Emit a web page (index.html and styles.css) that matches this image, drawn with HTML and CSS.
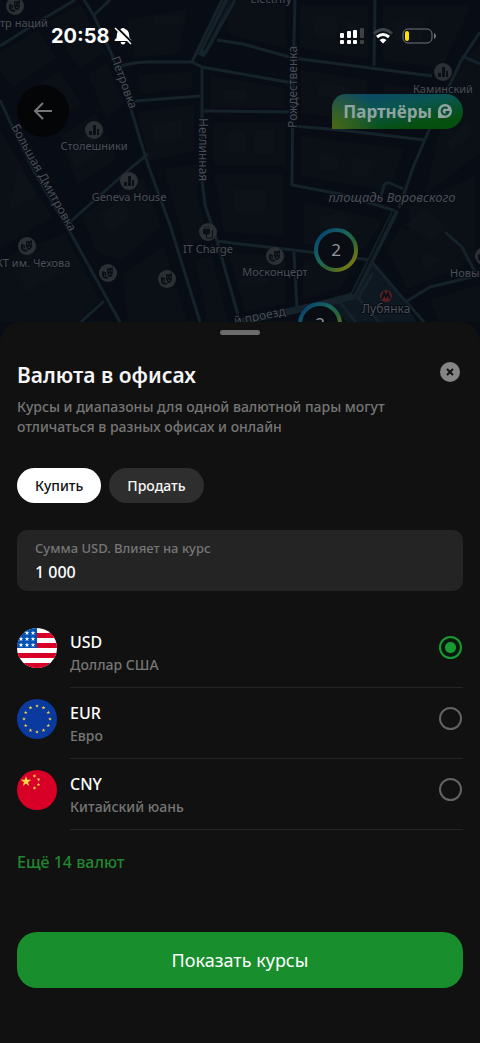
FILE: index.html
```html
<!DOCTYPE html>
<html lang="ru">

<head>
    <meta charset="UTF-8">
    <meta name="viewport" content="width=device-width, initial-scale=1.0">
    <title>Валюта в офисах</title>
    <link rel="stylesheet" href="styles.css">
</head>

<body>
    <div class="screen">
        <header class="top">
            <svg class="map" viewBox="0 0 480 342" preserveAspectRatio="xMidYMin slice" aria-hidden="true">
                <defs>
                    <linearGradient id="ring" x1="0" y1="0" x2="1" y2="1">
                        <stop offset="0.1" stop-color="#07446f" />
                        <stop offset="0.4" stop-color="#1b665c" />
                        <stop offset="0.6" stop-color="#286337" />
                        <stop offset="0.9" stop-color="#7b7a10" />
                    </linearGradient>
                    <g id="poi-house">
                        <circle r="9" fill="#2b3035" />
                        <path d="M-5 5v-4h3v4zM-1 5v-10h3v10zM3 5v-6h2v6z" fill="#0b1016" />
                    </g>
                    <g id="poi-theatre">
                        <circle r="9" fill="#2b3035" />
                        <path d="M-1-5q3 1 6-1v6q-1 4-3 4t-3-4zM-6-2l4 1v4l3 2q-5 2-7-2z" fill="#0b1016" />
                        <path d="M0-2h1.500M3-2h1.500M1 1q1 1 2 0M-4 1h1M-4 3h2" stroke="#2b3035" fill="none" />
                    </g>
                </defs>
                <rect width="480" height="342" fill="#080d15" />
                <g class="map-blocks">
                    <path d="M0 52l38-22 18 28-43 29L0 72zM48 22l32-18 26 48-26 17zM18 98l42-27 21 33-43 28zM88 75l19-12 18 41-19 13zM60 137l36-24 21 46-40 25zM137 112l57-7v46l-45 10zM127 20l60-11-8 45-44 3zM138 75l54-3v16l-51 6zM210 75l74 13v20h-74zM214 123h71v42h-71zM214 174h69v62l-59-4zM300 5h68v54l-68-11zM301 70l66 10v40l-66-6zM383 5h88l-29 63-59-8zM384 83l47 9-19 36-28-4zM301 136l103 13-16 42-87-15zM304 202l79 18-18 29-61-5zM409 206l66-30v90l-66-26zM387 250l14-23 65 38-58 24zM303 260l50 6-12 22-38 11zM228 253l57 3v48l-40 7zM164 170l34-7v36l11 41-23 6zM82 215l60-38 19 49-40 35-25-10zM0 130l52 87-52 31zM0 260l65-27 35 67-19 22H0zM123 275l41-30 23 77h-59zM195 260l17-4 16 66h-20zM452 75l28-32v110l-55 42zM430 300l50-16v38h-40zM220 0h66v48l-57-14z" />
                </g>
                <g class="map-courts">
                    <path d="M24 104l26-17 9 13-27 18zM67 147l24-14 9 20-24 14zM151 124l31-4v18l-27 5zM156 16h25l-4 9h-25zM224 90h22v10h-22zM228 132h17v20h-17zM255 130h19v24h-19zM315 17h22v18h-22zM347 20l12 4v14l-12-2zM318 82l32 5v12l-32-2zM320 152l19 3v15h-19zM353 157l20 5-6 16-16-3zM320 217l23-6 9 16-16 12-16-3zM406 225l17-18 24 19-14 16zM422 251l21 9-20 10zM18 164l19 31-28 17zM18 269l34-15 11 18-38 20zM99 215l23-15 9 18-20 15zM235 190h30v22h-30zM242 266h26v17h-26zM395 22l33-5-8 25-25-2zM447 142l20-21 6 12-22 20z" />
                </g>
                <path d="M316 302l40-8 16-32 28 33 17 27-57 10-28-22z" fill="#0e1820" />
                <g class="roads">
                    <path d="M0 46l38-24L75 0M84 0l10 16 18 39 14 38 22 72 22 60 30 97M94 15l16-15M121 66q14-4 29-4h42l10 5 91 16M202 68v112l3 25 12 36 23 81M192 62l30-62M205 54l30-54M217 40l26 4 50 14 139 18M135 101l65-5M204 111l89 1M0 100l10 22 26 53 34 57 50 90M70 222l62-55 16-13M104 301l-23 21M217 241l23 3 70 8 60 8M295 0l-2 80-1 105 48 9 53 16M375 0l-1 66M293 126l47 4 85 10M480 32l-19 29-21 44-26 60-15 43M462 56l18 8M380 200l4-15q2-3 6-2l13 6M294 252l3 56M407 301l23-14 50-12M445 232l17 15 13 25M372 262l22 26 30 34M373 273l-15 25 21 24M338 300l18 22" />
                </g>
                <g class="avenues">
                    <path d="M396 210l-26 52-17 34-34 9-79 17" />
                    <path d="M201 56l27-56" />
                </g>
                <path d="M394 211l-26 53-15 30M204 50l26-50" fill="none" stroke="#0a1118" stroke-width="2" />

                <g class="pois">
                    <use href="#poi-theatre" x="15" y="6" />
                    <use href="#poi-house" x="94" y="130" />
                    <use href="#poi-house" x="129" y="181" />
                    <use href="#poi-theatre" x="27" y="246" />
                    <use href="#poi-theatre" x="108" y="273" />
                    <use href="#poi-theatre" x="167" y="279" />
                    <use href="#poi-theatre" x="275" y="256" />
                    <use href="#poi-house" x="443" y="72" />
                    <use href="#poi-theatre" x="484" y="256" />
                    <circle cx="208" cy="232" r="9" fill="#2b3035" />
                    <path d="M203 229h7v4q-1 2-3.500 2T203 233z" fill="#0b1016" />
                    <path d="M205 226v4M208 226v4M206.500 234v4h6v-8" fill="none" stroke="#0b1016" />
                    <circle cx="386" cy="296" r="6" fill="#5c1d22" />
                    <path d="M382 299l2-6 2 4 2-4 2 6" fill="none" stroke="#0b1016" stroke-width="2" />
                </g>

                <g class="map-labels">
                    <text x="0" y="27">тр наций</text>
                    <text x="271" y="3" text-anchor="middle">Electrify</text>
                    <text x="94" y="150" text-anchor="middle">Столешники</text>
                    <text x="129" y="201" text-anchor="middle">Geneva House</text>
                    <text x="208" y="253" text-anchor="middle">IT Charge</text>
                    <text x="-4" y="267">КТ им. Чехова</text>
                    <text x="275" y="276" text-anchor="middle">Москонцерт</text>
                    <text x="443" y="93" text-anchor="middle">Каминский</text>
                    <text x="450" y="277">Новый</text>
                    <text class="label-big" x="386" y="313" text-anchor="middle">Лубянка</text>
                    <text class="label-square" x="392" y="202" text-anchor="middle">площадь Воровского</text>
                    <g class="streets">
                        <text transform="translate(111 58) rotate(70)">Петровка</text>
                        <text transform="translate(11 127) rotate(61)">Большая Дмитровка</text>
                        <text transform="translate(199 118) rotate(90)">Неглинная</text>
                        <text transform="translate(297 128) rotate(-90)">Рождественка</text>
                        <text transform="translate(235 325) rotate(-11)">й проезд</text>
                    </g>
                </g>

                <g class="clusters">
                    <circle cx="336" cy="250" r="20" />
                    <text x="336" y="256" text-anchor="middle">2</text>
                    <circle cx="320" cy="324" r="20" />
                    <text x="320" y="330" text-anchor="middle">2</text>
                </g>
            </svg>

            <div class="status-bar">
                <span class="clock">20:58
                    <svg width="18" height="18" viewBox="0 0 18 18" aria-hidden="true">
                        <path d="M9 1q1.500 0 2 1 3.500 1 4 5l.5 4 2 2q0 1-1 1H1.500q-1 0-1-1l2-2 .5-4Q3.500 3 7 2q.5-1 2-1zM6.500 15h5q-.5 2.500-2.500 2.500t-2.500-2.500z" fill="#fff" />
                        <path d="M2.500 0l16 16" stroke="#090e15" stroke-width="2" />
                        <path d="M1 1l16 16" stroke="#fff" stroke-width="1.500" />
                    </svg>
                </span>
                <span class="indicators">
                    <svg width="24" height="17" viewBox="0 0 24 17" aria-hidden="true">
                        <g fill="#fff">
                            <rect y="5" width="4" height="5" rx="1" />
                            <rect x="7" y="3" width="4" height="7" rx="1" />
                            <rect x="13" y="2" width="4" height="8" rx="1" />
                            <rect y="12" width="4" height="4" rx="1" />
                            <rect x="7" y="12" width="4" height="4" rx="1" />
                            <rect x="13" y="12" width="4" height="4" rx="1" />
                        </g>
                        <g fill="#3e4247">
                            <rect x="20" y="0" width="4" height="10" rx="1" />
                            <rect x="20" y="12" width="4" height="4" rx="1" />
                        </g>
                    </svg>
                    <svg width="20" height="16" viewBox="0 0 20 16" aria-hidden="true">
                        <path d="M1 5.500q9-8 18 0" fill="none" stroke="#3e4247" stroke-width="3" />
                        <path d="M4 9q6-5 12 0" fill="none" stroke="#fff" stroke-width="3" />
                        <path d="M6.500 12q3.500-3 7 0L10 15.500z" fill="#fff" />
                    </svg>
                    <svg width="34" height="16" viewBox="0 0 34 16" aria-hidden="true">
                        <rect x="1" y="1" width="29" height="14" rx="5" fill="none" stroke="#74777b" />
                        <path d="M32 5q2 1 2 3t-2 3z" fill="#74777b" />
                        <rect x="3" y="3" width="4" height="10" rx="2" fill="#ffe000" />
                    </svg>
                </span>
            </div>

            <div class="map-controls">
                <button class="back" type="button" aria-label="Назад">
                    <svg width="20" height="20" viewBox="0 0 20 20" aria-hidden="true">
                        <path d="M19 10H2M10 2l-8 8 8 8" />
                    </svg>
                </button>
                <a class="partners" href="#">Партнёры
                    <svg width="14" height="14" viewBox="0 0 14 14" aria-hidden="true">
                        <path d="M0 14V7a7 7 0 1 1 7 7z" fill="#8fa4a2" />
                        <path d="M9.500 4.500a3.500 3.500 0 1 0 1 3.500H7.500" fill="none" stroke="#0b4a30" stroke-width="2" />
                    </svg>
                </a>
            </div>
        </header>

        <main class="sheet">
            <div class="handle"></div>

            <div class="sheet-head">
                <h1>Валюта в офисах</h1>
                <button class="close" type="button" aria-label="Закрыть">
                    <svg width="8" height="8" viewBox="0 0 8 8" aria-hidden="true">
                        <path d="M1 1l6 6M7 1L1 7" />
                    </svg>
                </button>
            </div>
            <p class="hint">Курсы и диапазоны для одной валютной пары могут отличаться в разных офисах и онлайн</p>

            <div class="tabs">
                <button class="tab active" type="button">Купить</button>
                <button class="tab" type="button">Продать</button>
            </div>

            <div class="field">
                <label for="amount">Сумма USD. Влияет на курс</label>
                <input id="amount" type="text" inputmode="numeric" value="1 000">
            </div>

            <div class="currencies">
                <label class="currency">
                    <svg class="flag" viewBox="0 0 40 40" aria-hidden="true">
                        <defs>
                            <path id="star" d="M0-1L.225-.309H.951L.363.118.588.809 0 .382-.588.809-.363.118-.951-.309H-.225z" />
                        </defs>
                        <rect width="40" height="40" fill="#fff" />
                        <path d="M0 5h40v5H0zM0 15h40v5H0zM0 25h40v5H0zM0 35h40v5H0z" fill="#d80027" />
                        <rect width="20" height="20" fill="#0052b4" />
                        <g fill="#fff">
                            <use href="#star" transform="translate(10 5) scale(2.500)" />
                            <use href="#star" transform="translate(16 5) scale(2.500)" />
                            <use href="#star" transform="translate(4 11) scale(2.500)" />
                            <use href="#star" transform="translate(10 11) scale(2.500)" />
                            <use href="#star" transform="translate(16 11) scale(2.500)" />
                            <use href="#star" transform="translate(4 17) scale(2.500)" />
                            <use href="#star" transform="translate(10 17) scale(2.500)" />
                            <use href="#star" transform="translate(16 17) scale(2.500)" />
                        </g>
                    </svg>
                    <span class="currency-row">
                        <span class="currency-text">
                            <span class="code">USD</span>
                            <span class="name">Доллар США</span>
                        </span>
                        <input type="radio" name="currency" value="usd" checked>
                    </span>
                </label>

                <label class="currency">
                    <svg class="flag" viewBox="0 0 40 40" aria-hidden="true">
                        <rect width="40" height="40" fill="#0b3a9e" />
                        <g fill="#ffda44">
                            <use href="#star" transform="translate(20 7) scale(2)" />
                            <use href="#star" transform="translate(26.500 8.700) scale(2)" />
                            <use href="#star" transform="translate(31.300 13.500) scale(2)" />
                            <use href="#star" transform="translate(33 20) scale(2)" />
                            <use href="#star" transform="translate(31.300 26.500) scale(2)" />
                            <use href="#star" transform="translate(26.500 31.300) scale(2)" />
                            <use href="#star" transform="translate(20 33) scale(2)" />
                            <use href="#star" transform="translate(13.500 31.300) scale(2)" />
                            <use href="#star" transform="translate(8.700 26.500) scale(2)" />
                            <use href="#star" transform="translate(7 20) scale(2)" />
                            <use href="#star" transform="translate(8.700 13.500) scale(2)" />
                            <use href="#star" transform="translate(13.500 8.700) scale(2)" />
                        </g>
                    </svg>
                    <span class="currency-row">
                        <span class="currency-text">
                            <span class="code">EUR</span>
                            <span class="name">Евро</span>
                        </span>
                        <input type="radio" name="currency" value="eur">
                    </span>
                </label>

                <label class="currency">
                    <svg class="flag" viewBox="0 0 40 40" aria-hidden="true">
                        <rect width="40" height="40" fill="#d80027" />
                        <g fill="#ffda44">
                            <use href="#star" transform="translate(9 11.500) scale(5.500)" />
                            <use href="#star" transform="translate(17.500 6) rotate(20) scale(2)" />
                            <use href="#star" transform="translate(21.500 9.500) rotate(40) scale(2)" />
                            <use href="#star" transform="translate(21.500 14.500) scale(2)" />
                            <use href="#star" transform="translate(17.500 18) rotate(20) scale(2)" />
                        </g>
                    </svg>
                    <span class="currency-row">
                        <span class="currency-text">
                            <span class="code">CNY</span>
                            <span class="name">Китайский юань</span>
                        </span>
                        <input type="radio" name="currency" value="cny">
                    </span>
                </label>
            </div>

            <a class="more" href="#">Ещё 14 валют</a>

            <button class="submit" type="button">Показать курсы</button>
        </main>
    </div>
</body>

</html>
```
FILE: styles.css
```css
* {
    box-sizing: border-box;
}

body {
    margin: 0;
    background: #111;
    color: #fff;
    font-family: "Noto Sans", "Open Sans", sans-serif;
}

button,
input {
    font-family: inherit;
    border: 0;
    margin: 0;
    padding: 0;
}

a {
    text-decoration: none;
}

.screen {
    min-height: 100vh;
    display: flex;
    flex-direction: column;
}

/* map with the controls over it */
.top {
    position: relative;
    height: 342px;
    overflow: hidden;
}

.map {
    position: absolute;
    inset: 0;
    width: 100%;
    height: 100%;
}

.map-blocks {
    fill: #0b1017;
}

.map-courts {
    fill: #0d1219;
}

.roads {
    fill: none;
    stroke: #15222a;
    stroke-width: 3;
    stroke-linejoin: round;
}

.avenues {
    fill: none;
    stroke: #15222a;
    stroke-width: 7;
    stroke-linejoin: round;
}

.map-labels {
    fill: #4a4f55;
    font-size: 11px;
    stroke: #080d15;
    stroke-width: 2px;
    paint-order: stroke;
}

.label-big,
.streets {
    font-size: 12px;
}

.label-square {
    font-size: 13px;
    font-style: italic;
}

.clusters circle {
    fill: #090c13;
    stroke: url(#ring);
    stroke-width: 4px;
}

.clusters text {
    fill: #92959a;
    font-size: 17px;
}

.status-bar,
.map-controls {
    position: relative;
    display: flex;
    align-items: center;
    justify-content: space-between;
}

.status-bar {
    height: 72px;
    padding: 0 44px 0 51px;
}

.clock {
    display: flex;
    align-items: center;
    gap: 4px;
    font-family: Inter, sans-serif;
    font-size: 20px;
    font-weight: 700;
}

.indicators {
    display: flex;
    align-items: center;
    gap: 9px;
}

.map-controls {
    padding: 13px 17px;
}

.back {
    width: 52px;
    height: 52px;
    border-radius: 50%;
    background: #040506;
    display: grid;
    place-items: center;
}

.back svg {
    fill: none;
    stroke: #777;
    stroke-width: 2;
}

.partners {
    height: 35px;
    padding: 0 11px;
    display: flex;
    align-items: center;
    gap: 6px;
    border-radius: 14px 18px 18px 0;
    background:
        radial-gradient(circle at 0 100%, #4a6814, transparent 48px),
        linear-gradient(170deg, #0a4967 10%, #0a5550 40%, #06500f 80%);
    color: #8fa4a2;
    font-size: 17px;
    font-weight: 700;
}

/* bottom sheet */
.sheet {
    position: relative;
    flex: 1;
    margin-top: -20px;
    padding: 8px 17px 55px 17px;
    border-radius: 20px 20px 0 0;
    background: #111;
    display: flex;
    flex-direction: column;
}

.handle {
    width: 40px;
    height: 5px;
    margin: 0 auto;
    border-radius: 3px;
    background: #6b6b6b;
}

.sheet-head {
    display: flex;
    align-items: center;
    justify-content: space-between;
    margin-top: 24px;
    padding-right: 3px;
}

h1 {
    margin: 0;
    font-size: 21px;
    line-height: 32px;
    font-weight: 600;
    color: #f5f5f5;
}

.close {
    width: 20px;
    height: 20px;
    margin-bottom: 6px;
    border-radius: 50%;
    background: #858585;
    display: grid;
    place-items: center;
}

.close svg {
    fill: none;
    stroke: #111;
    stroke-width: 2;
}

.hint {
    max-width: 400px;
    margin: 6px 0 0;
    font-size: 14px;
    line-height: 20px;
    font-weight: 500;
    color: #767676;
}

.tabs {
    display: flex;
    gap: 8px;
    margin-top: 31px;
}

.tab {
    height: 35px;
    padding: 0 18px;
    border-radius: 18px;
    background: #2e2e2e;
    color: #f5f5f5;
    font-size: 14px;
    font-weight: 500;
}

.tab.active {
    background: #fff;
    color: #111;
}

.field {
    margin-top: 27px;
    padding: 8px 18px 6px;
    border-radius: 10px;
    background: #242424;
    display: flex;
    flex-direction: column;
}

.field label {
    font-size: 13px;
    line-height: 20px;
    font-weight: 500;
    color: #767676;
}

.field input {
    width: 100%;
    height: 27px;
    background: none;
    color: #fff;
    font-size: 16px;
    font-weight: 500;
    outline: none;
}

.currencies {
    margin-top: 26px;
}

.currency {
    display: flex;
    align-items: center;
    gap: 13px;
}

.flag {
    width: 40px;
    height: 40px;
    margin-bottom: 9px;
    border-radius: 50%;
}

.currency-row {
    flex: 1;
    height: 71px;
    padding: 6px 1px 4px 0;
    border-bottom: 1px solid #252525;
    display: flex;
    align-items: center;
    justify-content: space-between;
}

.currency-text {
    display: flex;
    flex-direction: column;
}

.code {
    font-size: 16px;
    line-height: 24px;
    font-weight: 500;
}

.name {
    font-size: 14px;
    line-height: 22px;
    font-weight: 500;
    color: #767676;
}

input[type="radio"] {
    appearance: none;
    width: 23px;
    height: 23px;
    margin-bottom: 11px;
    border: 2px solid #636363;
    border-radius: 50%;
}

input[type="radio"]:checked {
    border-color: #1a9a32;
    background: radial-gradient(circle, #1a9a32 5px, #0b1a0e 6px);
}

.more {
    align-self: flex-start;
    margin-top: 20px;
    font-size: 16px;
    line-height: 24px;
    font-weight: 500;
    color: #21862f;
}

.submit {
    height: 56px;
    margin-top: auto;
    border-radius: 20px;
    background: #188f2c;
    color: #fff;
    font-size: 18px;
}
```
